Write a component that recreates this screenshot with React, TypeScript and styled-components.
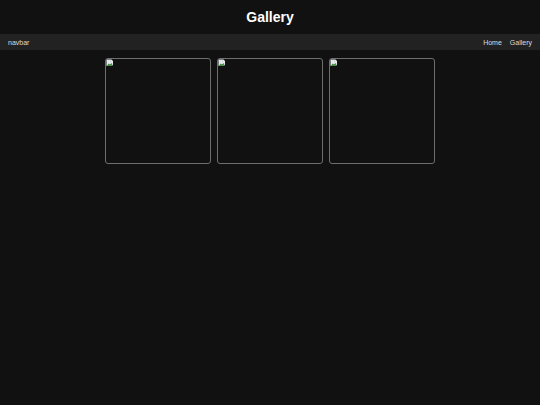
import React from 'react';
import styled, { createGlobalStyle } from 'styled-components';

const GlobalStyle = createGlobalStyle`
  html, body {
    margin: 0;
    padding: 0;
    background-color: #111111;
    font-family: "Liberation Sans", Arial, sans-serif;
    color: #ffffff;
  }
`;

const Header = styled.header`
  height: 34px;
  display: flex;
  align-items: center;
  justify-content: center;
`;

const Title = styled.h1`
  margin: 0;
  font-size: 14px;
  font-weight: bold;
  color: #ffffff;
`;

const Navbar = styled.nav`
  height: 16px;
  background-color: #222222;
  display: flex;
  align-items: center;
  justify-content: space-between;
  padding: 0 8px;
  font-size: 7px;
  color: #dddddd;
`;

const NavLinks = styled.div`
  display: flex;
  gap: 8px;
`;

const NavLink = styled.span`
  color: #dddddd;
`;

const Grid = styled.main`
  display: flex;
  justify-content: center;
  gap: 6px;
  padding-top: 8px;
`;

const Frame = styled.div`
  width: 104px;
  height: 104px;
  border: 1px solid #6e6e6e;
  border-radius: 3px;
  position: relative;
`;

const BrokenIcon = styled.svg`
  position: absolute;
  top: 0;
  left: 0;
`;

const BrokenImage: React.FC = () => (
  <BrokenIcon width="8" height="8" viewBox="0 0 8 8">
    <path d="M0.5 0.5 H5.5 L7 2 V6 L5.5 7 H0.5 Z" fill="#e4e8ea" />
    <path d="M1 6.8 L2.6 4.4 L4 5.6 L5.6 4 L6.6 6.2 L5.4 7 H1 Z" fill="#3f8f3f" />
    <circle cx="4.6" cy="2.2" r="0.8" fill="#c4d2de" />
  </BrokenIcon>
);

export default function App() {
  return (
    <>
      <GlobalStyle />
      <Header>
        <Title>Gallery</Title>
      </Header>
      <Navbar>
        <span>navbar</span>
        <NavLinks>
          <NavLink>Home</NavLink>
          <NavLink>Gallery</NavLink>
        </NavLinks>
      </Navbar>
      <Grid>
        {[1, 2, 3].map((n) => (
          <Frame key={n}>
            <BrokenImage />
          </Frame>
        ))}
      </Grid>
    </>
  );
}
